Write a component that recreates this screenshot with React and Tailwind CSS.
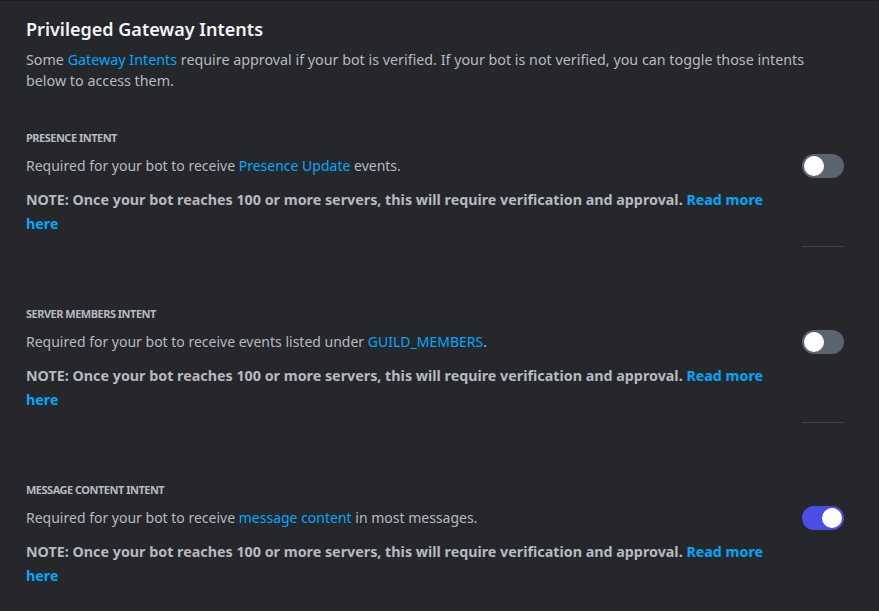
import { useState } from 'react'

const font = { fontFamily: '"Noto Sans", "Open Sans", sans-serif' }

function Toggle({ on, onChange }) {
  return (
    <button
      onClick={() => onChange(!on)}
      className={`relative w-[42px] h-[24px] -mt-[2px] rounded-full shrink-0 ${on ? 'bg-[#4b4ee4]' : 'bg-[#5b6270]'}`}
    >
      <span
        className={`absolute top-[2px] w-[20px] h-[20px] rounded-full bg-white ${on ? 'left-[20px]' : 'left-[2px]'}`}
      />
    </button>
  )
}

function Intent({ label, children, on, onChange, divider }) {
  return (
    <div className={divider ? 'mb-[70px]' : ''}>
      <div className="text-[11px] leading-4 font-bold uppercase tracking-[-0.5px] text-[#b5bac1] mb-[10px]">{label}</div>
      <div className="flex">
        <div className="flex-1 mr-[30px]">
          <p className="text-[14px] leading-5 text-[#b5bac1]">{children}</p>
          <p className="mt-3 text-[14.3px] leading-6 font-bold text-[#b5bac1]">
            NOTE: Once your bot reaches 100 or more servers, this will require verification and approval.{' '}
            <a className="text-[#00a8fc]">Read more here</a>
          </p>
        </div>
        <div className="w-[42px] flex flex-col justify-between">
          <Toggle on={on} onChange={onChange} />
          {divider && <div className="h-px bg-[#3f4147] -mb-[11px]" />}
        </div>
      </div>
    </div>
  )
}

export default function App() {
  const [presence, setPresence] = useState(false)
  const [members, setMembers] = useState(false)
  const [content, setContent] = useState(true)

  return (
    <div className="h-[611px] bg-[#26272b] border-t border-[#1b1c1f] overflow-hidden" style={font}>
      <div className="pl-[26px] pr-[35px] pt-[16px]">
        <h2 className="text-[18px] leading-6 font-semibold text-[#f2f3f5]">Privileged Gateway Intents</h2>
        <p className="mt-2 text-[14.3px] leading-[21px] text-[#b5bac1]">
          Some <a className="text-[#00a8fc]">Gateway Intents</a> require approval if your bot is verified. If your bot is not verified, you can toggle those intents below to access them.
        </p>

        <div className="mt-[39px]">
          <Intent label="Presence Intent" on={presence} onChange={setPresence} divider>
            Required for your bot to receive <a className="text-[#00a8fc]">Presence Update</a> events.
          </Intent>
          <Intent label="Server Members Intent" on={members} onChange={setMembers} divider>
            Required for your bot to receive events listed under <a className="text-[#00a8fc]">GUILD_MEMBERS</a>.
          </Intent>
          <Intent label="Message Content Intent" on={content} onChange={setContent}>
            Required for your bot to receive <a className="text-[#00a8fc]">message content</a> in most messages.
          </Intent>
        </div>
      </div>
    </div>
  )
}
